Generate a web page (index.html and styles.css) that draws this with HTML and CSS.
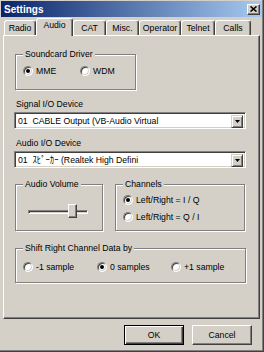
FILE: index.html
```html
<!DOCTYPE html>
<html lang="en">
<head>
    <meta charset="UTF-8">
    <title>Settings</title>
    <link rel="stylesheet" href="styles.css">
</head>
<body>
    <div class="window">
        <div class="titlebar">
            <span class="title">Settings</span>
            <span class="close-btn">
                <svg width="7" height="6" viewBox="0 0 7 6"><path d="M0.5 0.5 L6.5 5.5 M6.5 0.5 L0.5 5.5" stroke="#000" stroke-width="1.6"/></svg>
            </span>
        </div>

        <div class="tabs">
            <div class="tab">Radio</div>
            <div class="tab active">Audio</div>
            <div class="tab">CAT</div>
            <div class="tab">Misc.</div>
            <div class="tab">Operator</div>
            <div class="tab">Telnet</div>
            <div class="tab">Calls</div>
        </div>

        <div class="panel">
            <fieldset class="group driver">
                <legend>Soundcard Driver</legend>
                <div class="options driver-options">
                    <label class="radio"><span class="radio-box checked"></span>MME</label>
                    <label class="radio"><span class="radio-box"></span>WDM</label>
                </div>
            </fieldset>

            <div class="field-label">Signal I/O Device</div>
            <div class="combo">
                <span class="combo-text">01  CABLE Output (VB-Audio Virtual</span>
                <span class="combo-btn">
                    <svg width="5" height="3" viewBox="0 0 5 3"><path d="M0 0 H5 L2.5 3 Z" fill="#000"/></svg>
                </span>
            </div>

            <div class="field-label">Audio I/O Device</div>
            <div class="combo">
                <span class="combo-text">01  ｽﾋﾟｰｶｰ (Realtek High Defini</span>
                <span class="combo-btn">
                    <svg width="5" height="3" viewBox="0 0 5 3"><path d="M0 0 H5 L2.5 3 Z" fill="#000"/></svg>
                </span>
            </div>

            <div class="group-row">
                <fieldset class="group volume">
                    <legend>Audio Volume</legend>
                    <div class="slider">
                        <div class="track"></div>
                        <div class="thumb"></div>
                    </div>
                </fieldset>
                <fieldset class="group channels">
                    <legend>Channels</legend>
                    <div class="options channel-options">
                        <label class="radio"><span class="radio-box checked"></span>Left/Right = I / Q</label>
                        <label class="radio"><span class="radio-box"></span>Left/Right = Q / I</label>
                    </div>
                </fieldset>
            </div>

            <fieldset class="group shift">
                <legend>Shift Right Channel Data by</legend>
                <div class="options shift-options">
                    <label class="radio"><span class="radio-box"></span>-1 sample</label>
                    <label class="radio"><span class="radio-box checked"></span>0 samples</label>
                    <label class="radio"><span class="radio-box"></span>+1 sample</label>
                </div>
            </fieldset>
        </div>

        <div class="footer">
            <button class="btn default">OK</button>
            <button class="btn">Cancel</button>
        </div>
    </div>
</body>
</html>
```

FILE: styles.css
```css
* {
    margin: 0;
    padding: 0;
    box-sizing: border-box;
}

body {
    font-family: 'Liberation Sans', Arial, 'Noto Sans CJK JP', sans-serif;
    font-size: 8.7px;
    color: #000;
    background: #d4d0c8;
}

.window {
    width: 264px;
    height: 352px;
    padding-top: 1px;
    background: #d4d0c8;
    border-right: 1px solid #404040;
    border-bottom: 1px solid #404040;
    box-shadow: inset -1px -1px #808080;
    display: flex;
    flex-direction: column;
}

/* title bar */
.titlebar {
    height: 16px;
    margin: 0 1px;
    padding: 0 2px 0 3px;
    background: linear-gradient(90deg, #0a246a, #a6caf0);
    display: flex;
    align-items: center;
    justify-content: space-between;
}

.title {
    color: #fff;
    font-weight: bold;
    font-size: 10px;
}

.close-btn {
    width: 13px;
    height: 11px;
    background: #d4d0c8;
    border: 1px solid;
    border-color: #fff #404040 #404040 #fff;
    box-shadow: inset -1px -1px #808080;
    display: flex;
    align-items: center;
    justify-content: center;
}

/* tabs */
.tabs {
    height: 18px;
    padding-left: 4px;
    display: flex;
    align-items: flex-end;
    position: relative;
    z-index: 1;
}

.tab {
    height: 15px;
    padding-top: 1px;
    line-height: 12px;
    text-align: center;
    border: 1px solid;
    border-bottom: none;
    border-color: #fff #404040 transparent #fff;
    box-shadow: inset -1px 0 #808080;
    border-radius: 3px 3px 0 0;
}

.tab:nth-child(1) { width: 32px; }
.tab:nth-child(2) { width: 37px; }
.tab:nth-child(3) { width: 33px; }
.tab:nth-child(4) { width: 33px; }
.tab:nth-child(5) { width: 42px; }
.tab:nth-child(6) { width: 34px; }
.tab:nth-child(7) { width: 36px; }

.tab.active {
    height: 18px;
    margin-bottom: -1px;
    padding-top: 0;
    background: #d4d0c8;
}

/* tab page */
.panel {
    height: 284px;
    margin: 0 3px;
    padding-left: 10px;
    border: 1px solid;
    border-color: #fff #404040 #404040 #fff;
    box-shadow: inset -1px -1px #808080;
}

.group {
    min-width: 0;
    margin-left: 1px;
    padding: 0 7px;
    border: 1px solid #808080;
    box-shadow: 1px 1px 0 #fff, inset 1px 1px 0 #fff;
}

.group legend {
    padding: 0 2px;
    line-height: 10px;
    background: #d4d0c8;
}

.driver {
    width: 121px;
    height: 41px;
    margin-top: 13px;
}

.field-label {
    margin: 9px 0 0 2px;
    line-height: 11px;
}

.combo {
    width: 232px;
    height: 17px;
    margin-top: 2px;
    padding: 2px;
    display: flex;
    background: #fff;
    border: 1px solid;
    border-color: #808080 #fff #fff #808080;
    box-shadow: inset 1px 1px #404040, inset -1px -1px #d4d0c8;
}

.combo-text {
    flex: 1;
    padding-left: 1px;
    line-height: 13px;
    white-space: pre;
    overflow: hidden;
}

.combo-btn {
    width: 12px;
    height: 13px;
    background: #d4d0c8;
    border: 1px solid;
    border-color: #d4d0c8 #404040 #404040 #d4d0c8;
    box-shadow: inset 1px 1px #fff, inset -1px -1px #808080;
    display: flex;
    align-items: center;
    justify-content: center;
}

.group-row {
    margin-top: 11px;
    display: flex;
    gap: 12px;
}

.volume {
    width: 88px;
    height: 52px;
}

.channels {
    width: 130px;
    height: 52px;
    margin-left: 0;
}

.shift {
    width: 231px;
    height: 40px;
    margin-top: 12px;
}

/* radio buttons */
.options {
    display: grid;
}

.driver-options {
    margin-top: 7px;
    grid-template-columns: 57px 57px;
}

.channel-options {
    margin-top: 6px;
    row-gap: 7px;
}

.shift-options {
    margin-top: 9px;
    grid-template-columns: 74px 74px 74px;
}

.radio {
    height: 10px;
    display: flex;
    align-items: center;
    gap: 3px;
    white-space: nowrap;
}

.radio-box {
    flex: none;
    width: 10px;
    height: 10px;
    border-radius: 50%;
    background: #fff;
    border: 1px solid;
    border-color: #808080 #fff #fff #808080;
    box-shadow: inset 1px 1px #404040, inset -1px -1px #d4d0c8;
    position: relative;
}

.radio-box.checked::after {
    content: '';
    position: absolute;
    left: 2px;
    top: 2px;
    width: 4px;
    height: 4px;
    border-radius: 50%;
    background: #000;
}

/* trackbar */
.slider {
    position: relative;
    width: 60px;
    height: 14px;
    margin: 15px 0 0 5px;
}

.track {
    position: absolute;
    left: 0;
    right: 0;
    top: 6px;
    height: 4px;
    border: 1px solid;
    border-color: #808080 #fff #fff #808080;
    box-shadow: inset 1px 1px #404040;
}

.thumb {
    position: absolute;
    left: 40px;
    top: 0;
    width: 9px;
    height: 14px;
    background: #d4d0c8;
    border: 1px solid;
    border-color: #fff #404040 #404040 #fff;
    box-shadow: inset -1px -1px #808080;
}

/* buttons */
.footer {
    padding: 6px 11px 0 0;
    display: flex;
    justify-content: flex-end;
    gap: 8px;
}

.btn {
    width: 60px;
    height: 20px;
    font: inherit;
    color: #000;
    background: #d4d0c8;
    border: 1px solid;
    border-color: #fff #404040 #404040 #fff;
    box-shadow: inset -1px -1px #808080;
}

.btn.default {
    border-color: #000;
    box-shadow: inset 1px 1px #fff, inset -1px -1px #404040, inset -2px -2px #808080;
}
```
